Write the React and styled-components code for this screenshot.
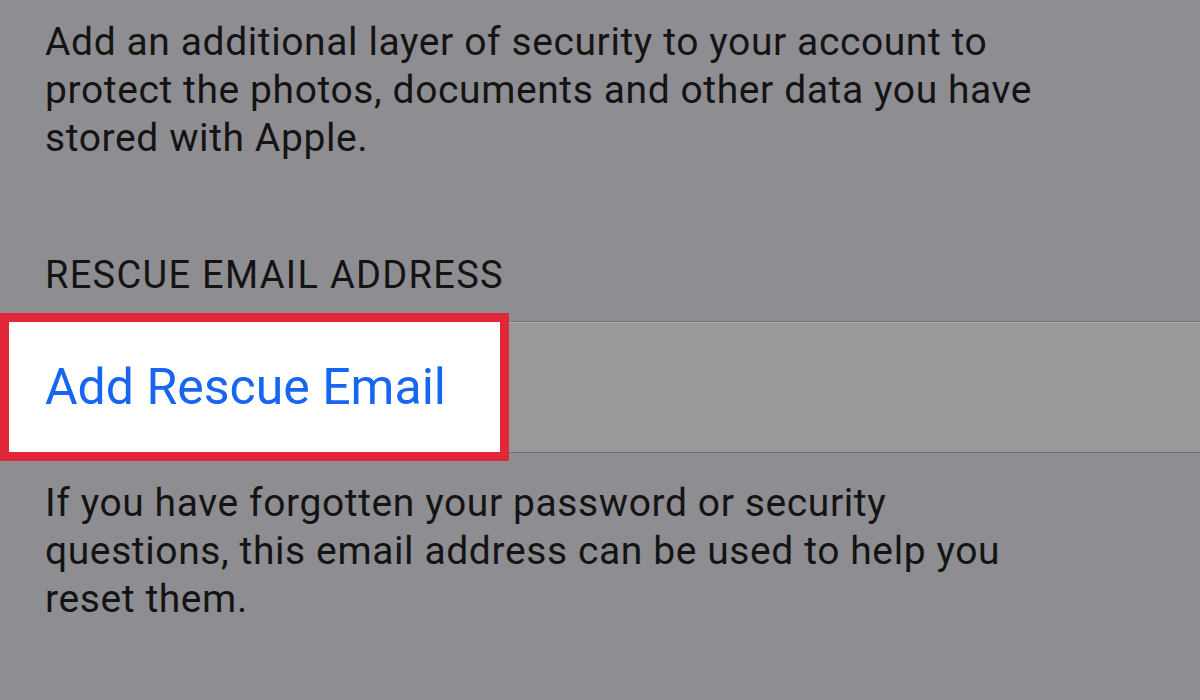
import styled, { createGlobalStyle } from "styled-components";

const pageGray = "#8e8d92";
const rowGray = "#999999";
const linkBlue = "#1766f2";
const highlightRed = "#e0283a";

const GlobalStyle = createGlobalStyle`
  html, body {
    margin: 0;
    padding: 0;
    background: ${pageGray};
  }
  body {
    font-family: Roboto, "Liberation Sans", sans-serif;
    color: #111;
    -webkit-font-smoothing: antialiased;
  }
`;

const Page = styled.div`
  width: 1200px;
  height: 700px;
  overflow: hidden;
  background: ${pageGray};
  padding-top: 18px;
  box-sizing: border-box;
`;

const Note = styled.p`
  margin: 0;
  padding: 0 45px;
  font-size: 39px;
  line-height: 48px;
  letter-spacing: 0.6px;
  color: #141414;
  white-space: nowrap;
`;

const SectionHeader = styled.h2`
  margin: 89px 0 22px;
  padding: 0 45px;
  font-size: 38px;
  font-weight: 400;
  line-height: 48px;
  letter-spacing: 1.3px;
  color: #141414;
`;

const Row = styled.div`
  display: flex;
  height: 130px;
  background: ${rowGray};
  border-top: 1px solid #6f6f72;
  border-bottom: 1px solid #6f6f72;
  box-shadow: inset 0 1px 0 #b0b0b0;
  margin-bottom: 26px;
`;

const HighlightCell = styled.button`
  all: unset;
  display: flex;
  align-items: center;
  width: 491px;
  margin-left: 9px;
  padding-left: 36px;
  box-sizing: border-box;
  background: #fff;
  box-shadow: 0 0 0 9px ${highlightRed};
  font-family: Roboto, "Liberation Sans", sans-serif;
  font-size: 50px;
  color: ${linkBlue};
  cursor: pointer;
`;

export default function App() {
  return (
    <Page>
      <GlobalStyle />
      <Note>
        Add an additional layer of security to your account to
        <br />
        protect the photos, documents and other data you have
        <br />
        stored with Apple.
      </Note>
      <SectionHeader>RESCUE EMAIL ADDRESS</SectionHeader>
      <Row>
        <HighlightCell>Add Rescue Email</HighlightCell>
      </Row>
      <Note>
        If you have forgotten your password or security
        <br />
        questions, this email address can be used to help you
        <br />
        reset them.
      </Note>
    </Page>
  );
}
